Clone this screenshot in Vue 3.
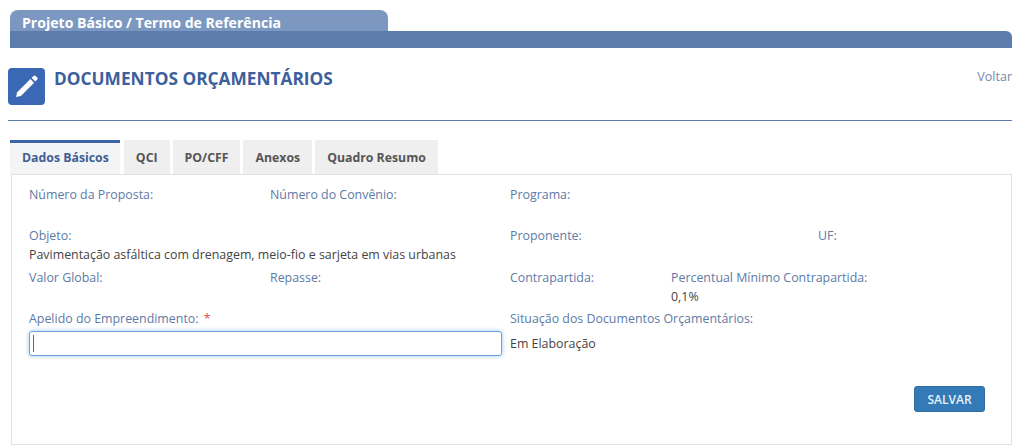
<script setup>
const tabs = ['Dados Básicos', 'QCI', 'PO/CFF', 'Anexos', 'Quadro Resumo']
</script>

<template>
  <div class="page">
    <div class="head-tab"><span>Projeto Básico / Termo de Referência</span></div>
    <div class="head-bar"></div>

    <div class="title-row">
      <div class="title-left">
        <div class="icon-box">
          <svg width="27" height="27" viewBox="0 0 27 27">
            <path d="M4.2 19.2 17.4 6l3.7 3.7L7.9 22.9 3 24z" fill="#fff" />
            <path d="M18.6 4.8l1.9-1.9a1.5 1.5 0 0 1 2.1 0l1.6 1.6a1.5 1.5 0 0 1 0 2.1l-1.9 1.9z" fill="#fff" />
          </svg>
        </div>
        <h1>DOCUMENTOS ORÇAMENTÁRIOS</h1>
      </div>
      <a class="back">Voltar</a>
    </div>

    <div class="tabs">
      <div v-for="(t, i) in tabs" :key="t" class="tab" :class="{ active: i === 0 }">{{ t }}</div>
    </div>

    <div class="panel">
      <div class="row r1">
        <label>Número da Proposta:</label>
        <label>Número do Convênio:</label>
        <label>Programa:</label>
      </div>
      <div class="row r2">
        <div class="span2">
          <label>Objeto:</label>
          <p>Pavimentação asfáltica com drenagem, meio-fio e sarjeta em vias urbanas</p>
        </div>
        <label>Proponente:</label>
        <span></span>
        <label>UF:</label>
      </div>
      <div class="row r3">
        <label>Valor Global:</label>
        <label>Repasse:</label>
        <label>Contrapartida:</label>
        <div class="span2">
          <label>Percentual Mínimo Contrapartida:</label>
          <p>0,1%</p>
        </div>
      </div>
      <div class="row r4">
        <div class="span2">
          <label>Apelido do Empreendimento: <em>*</em></label>
          <div class="field"><i class="caret"></i></div>
        </div>
        <div class="span3">
          <label>Situação dos Documentos Orçamentários:</label>
          <p class="status">Em Elaboração</p>
        </div>
      </div>
      <div class="actions"><button type="button">SALVAR</button></div>
    </div>
  </div>
</template>

<style scoped>
.page {
  width: 1024px;
  height: 447px;
  box-sizing: border-box;
  padding: 10px 12px 0 10px;
  background: #fff;
  font-family: "Open Sans", sans-serif;
  font-size: 12.4px;
  line-height: 18px;
  overflow: hidden;
}
.head-tab {
  width: 378px;
  height: 21px;
  box-sizing: border-box;
  padding: 5px 0 0 12px;
  background: #7d98c0;
  border-radius: 8px 8px 0 0;
  color: #fff;
  font-size: 14.1px;
  font-weight: 700;
  line-height: 16px;
  white-space: nowrap;
}
.head-bar {
  height: 17px;
  background: #5b7cad;
  border-radius: 0 6px 0 0;
}
.title-row {
  display: flex;
  justify-content: space-between;
  height: 72px;
  margin-left: -2px;
  border-bottom: 1px solid #5d7cab;
}
.title-left {
  display: flex;
  align-items: flex-start;
  padding-top: 20px;
}
.icon-box {
  width: 37px;
  height: 37px;
  display: flex;
  align-items: center;
  justify-content: center;
  background: #3a68b4;
  border-radius: 4px;
}
h1 {
  margin: 0 0 0 9px;
  color: #3d5f9c;
  font-size: 17.3px;
  line-height: 22px;
  font-weight: 700;
  white-space: nowrap;
}
.back {
  margin-top: 20px;
  color: #7489ad;
  font-size: 12.5px;
  line-height: 18px;
}
.tabs {
  display: flex;
  gap: 3px;
  margin-top: 19px;
  height: 34px;
  align-items: stretch;
}
.tab {
  box-sizing: border-box;
  padding: 9px 12px 0;
  background: #efefef;
  color: #555;
  font-size: 12.3px;
  font-weight: 700;
  line-height: 18px;
  white-space: nowrap;
}
.tab.active {
  padding-right: 11px;
  margin-right: 1px;
  background: #f3f4f5;
  border-top: 3px solid #3c63a4;
  padding-top: 6px;
  color: #3f5f95;
}
.panel {
  margin-left: 1px;
  height: 271px;
  box-sizing: border-box;
  border: 1px solid #e2e2e2;
  padding: 11px 0 0 17px;
  color: #444;
  background: #fff;
}
.row {
  display: grid;
  grid-template-columns: 241px 240px 161px 147px 1fr;
}
.r1 { height: 41px; }
.r2 { height: 42px; }
.r3 { height: 41px; }
.span2 { grid-column: span 2; }
.span3 { grid-column: span 3; }
label {
  display: block;
  color: #5e7aa6;
  font-size: 12.4px;
  line-height: 18px;
  white-space: nowrap;
}
em {
  margin-left: 2px;
  color: #d9534f;
  font-style: normal;
}
p {
  margin: 1px 0 0;
  color: #444;
  font-size: 12.4px;
  line-height: 18px;
  white-space: nowrap;
}
.field {
  position: relative;
  width: 473px;
  height: 25px;
  margin-top: 3px;
  box-sizing: border-box;
  border: 1px solid #6aa5dc;
  border-radius: 3px;
  box-shadow: 0 0 4px rgba(102, 175, 233, 0.7);
  background: #fff;
}
.caret {
  position: absolute;
  left: 3px;
  top: 3px;
  width: 1px;
  height: 17px;
  background: #666;
}
.status {
  margin-top: 3px;
  line-height: 25px;
}
.actions {
  display: flex;
  justify-content: flex-end;
  padding: 30px 26px 0 0;
}
button {
  width: 71px;
  height: 26px;
  border: 1px solid #2e6da4;
  border-radius: 3px;
  background: #337ab7;
  color: #e8f1f8;
  font-family: "Open Sans", sans-serif;
  font-size: 12px;
  font-weight: 600;
  padding: 0;
}
</style>
